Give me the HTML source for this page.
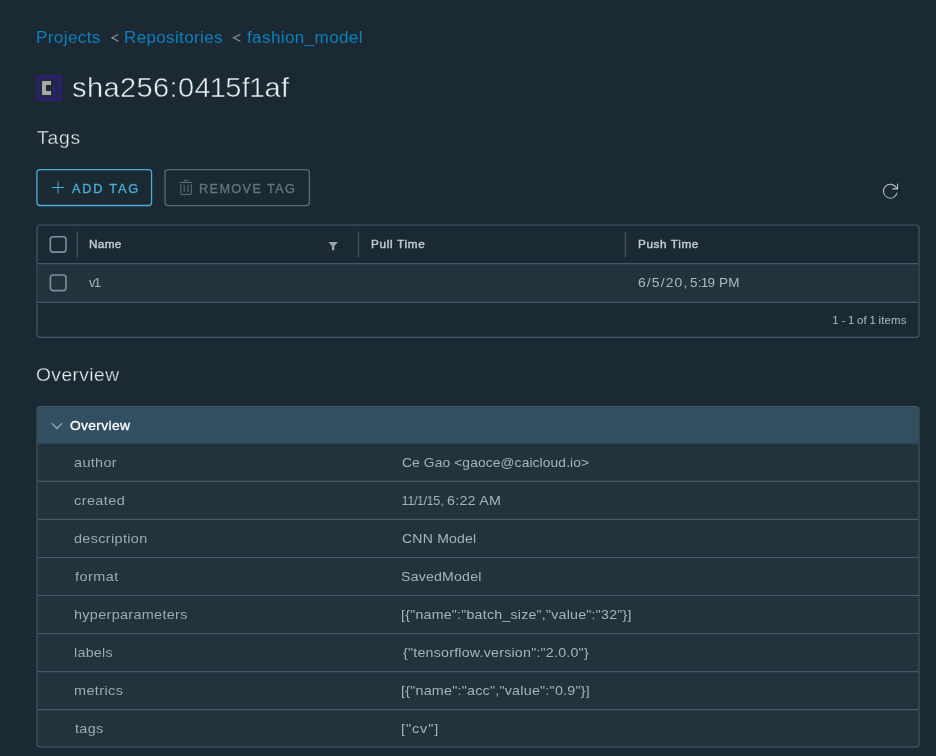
<!DOCTYPE html>
<html><head><meta charset="utf-8"><title>Artifact</title>
<style>
html,body{margin:0;padding:0;}
body{width:936px;height:756px;background:#1b2a32;position:relative;overflow:hidden;font-family:"Liberation Sans",sans-serif;}
.t{position:absolute;white-space:pre;line-height:20px;height:20px;display:block;will-change:transform;}
.abs{position:absolute;box-sizing:border-box;}
</style></head><body>
<svg class="abs" style="left:0;top:0" width="936" height="756" viewBox="0 0 936 756">
<!-- breadcrumb separators -->
<path d="M118.300 34.500L111.900 37.850L118.300 41.200" fill="none" stroke="#8e979c" stroke-width="1.100"/>
<path d="M240.300 34.500L233.500 37.850L240.300 41.200" fill="none" stroke="#8e979c" stroke-width="1.100"/>
<!-- buttons -->
<rect x="36.900" y="169.550" width="114.650" height="35.950" rx="3" fill="none" stroke="#49afd9" stroke-width="1.300"/>
<rect x="165.000" y="169.600" width="144.400" height="36.000" rx="3" fill="none" stroke="#5c6a73" stroke-width="1.300"/>
<!-- datagrid -->
<rect x="37.050" y="225.050" width="882.000" height="112.350" rx="3" fill="#1b2a32" stroke="#495865" stroke-width="1.12"/>
<rect x="37.650" y="263.650" width="880.800" height="38.750" fill="#21333b"/>
<line x1="37.6" y1="263.650" x2="918.4" y2="263.650" stroke="#495865" stroke-width="1.12"/>
<line x1="37.6" y1="302.400" x2="918.4" y2="302.400" stroke="#495865" stroke-width="1.12"/>
<line x1="77.250" y1="231.800" x2="77.250" y2="257.600" stroke="#495865" stroke-width="1.12"/>
<line x1="358.500" y1="231.800" x2="358.500" y2="257.600" stroke="#495865" stroke-width="1.12"/>
<line x1="625.400" y1="231.800" x2="625.400" y2="257.600" stroke="#495865" stroke-width="1.12"/>
<rect x="50.300" y="236.700" width="15.700" height="15.400" rx="2.800" fill="none" stroke="#80909a" stroke-width="1.600"/>
<rect x="50.400" y="275.000" width="15.600" height="15.600" rx="2.800" fill="none" stroke="#80909a" stroke-width="1.600"/>
<path d="M328.300 241.900H337.900L334.300 246.100V250.300H331.900V246.100Z" fill="#9aa5ab"/>
<!-- stack view -->
<rect x="37.050" y="406.600" width="881.900" height="340.400" rx="3" fill="#21333b" stroke="#495865" stroke-width="1.12"/>
<path d="M37.700 443.800V409.600a2.400 2.400 0 0 1 2.400 -2.400H915.900a2.400 2.400 0 0 1 2.400 2.400V443.800Z" fill="#324f62"/>
<line x1="37.6" y1="481.35" x2="918.4" y2="481.35" stroke="#495865" stroke-width="1.12"/>
<line x1="37.6" y1="519.40" x2="918.4" y2="519.40" stroke="#495865" stroke-width="1.12"/>
<line x1="37.6" y1="557.45" x2="918.4" y2="557.45" stroke="#495865" stroke-width="1.12"/>
<line x1="37.6" y1="595.50" x2="918.4" y2="595.50" stroke="#495865" stroke-width="1.12"/>
<line x1="37.6" y1="633.55" x2="918.4" y2="633.55" stroke="#495865" stroke-width="1.12"/>
<line x1="37.6" y1="671.60" x2="918.4" y2="671.60" stroke="#495865" stroke-width="1.12"/>
<line x1="37.6" y1="709.65" x2="918.4" y2="709.65" stroke="#495865" stroke-width="1.12"/>

<path d="M52.300 423.600L57.000 428.500L61.700 423.600" fill="none" stroke="#9aa4aa" stroke-width="1.350" stroke-linecap="round" stroke-linejoin="round"/>
<!-- icons -->
<g transform="translate(49.450 178.850) scale(0.476)" fill="#49afd9"><path d="M30 17H19V6a1 1 0 0 0-2 0v11H6a1 1 0 0 0 0 2h11v11a1 1 0 0 0 2 0V19h11a1 1 0 0 0 0-2z"/></g>
<g transform="translate(177.500 178.750) scale(0.476)" fill="#62707a"><path d="M27.140 34H8.860A2.930 2.930 0 0 1 6 31V11.230h2V31a.93.93 0 0 0 .86 1h18.280a.93.93 0 0 0 .86-1V11.230h2V31a2.930 2.930 0 0 1-2.860 3z"/><path d="M30.780 9H5a1 1 0 0 1 0-2h25.780a1 1 0 0 1 0 2z"/><rect x="21" y="13" width="2" height="15"/><rect x="13" y="13" width="2" height="15"/><path d="M23 5.860h-1.900V4h-6.200v1.860H13V4a2 2 0 0 1 1.900-2h6.200A2 2 0 0 1 23 4z"/></g>
<g transform="translate(881.350 183.250) scale(0.485)" fill="#b4c0c7"><path d="M22.400 11.650a1.090 1.090 0 0 0 1.090 1.090H34.430V1.810a1.090 1.090 0 1 0-2.190 0V8.950a15.410 15.410 0 1 0 1.300 11.330 1.090 1.090 0 0 0-2.110-.56A13.220 13.220 0 1 1 30.470 10.560H23.490a1.090 1.090 0 0 0-1.090 1.090z"/></g>
</svg>
<!-- title icon -->
<div class="abs" style="left:36px;top:75px;width:26px;height:26px;background:#2a2168;"></div>
<div class="abs" style="left:40px;top:79px;width:18px;height:18px;background:#1f2b36;"></div>
<div class="abs" style="left:42px;top:81px;width:9px;height:14px;background:#a6a6a6;"></div>
<div class="abs" style="left:46px;top:85px;width:6px;height:6px;background:#1f2b36;"></div>
<div class="abs" style="left:53px;top:81px;width:4px;height:3px;background:#2a2168;"></div>
<div class="abs" style="left:53px;top:86px;width:4px;height:9px;background:#2a2168;"></div>
<span id="bc1" class="t" style="left:35.94px;top:28.06px;font-size:16px;font-weight:400;color:#0d7fbd;letter-spacing:0.337px;transform:scaleX(1.0700);transform-origin:0 50%;">Projects</span>
<span id="bc2" class="t" style="left:123.75px;top:28.06px;font-size:16px;font-weight:400;color:#0d7fbd;letter-spacing:0.324px;transform:scaleX(1.0651);transform-origin:0 50%;">Repositories</span>
<span id="bc3" class="t" style="left:247.20px;top:28.06px;font-size:16px;font-weight:400;color:#0d7fbd;letter-spacing:0.350px;transform:scaleX(1.0670);transform-origin:0 50%;">fashion_model</span>
<span id="title" class="t" style="left:72.47px;top:77.70px;font-size:28px;font-weight:400;color:#e9ecef;letter-spacing:0.362px;transform:scaleX(1.0369);transform-origin:0 50%;-webkit-text-stroke:0.5px #1b2a32;">sha256:04<span style="margin:0 -1.12px">1</span>5f<span style="margin:0 -1.12px">1</span>af</span>
<span id="tags" class="t" style="left:37.30px;top:127.76px;font-size:18px;font-weight:400;color:#e9ecef;letter-spacing:0.732px;transform:scaleX(1.0700);transform-origin:0 50%;-webkit-text-stroke:0.3px #1b2a32;">Tags</span>
<span id="add" class="t" style="left:72.30px;top:178.54px;font-size:12px;font-weight:400;color:#49afd9;letter-spacing:1.686px;transform:scaleX(1.0600);transform-origin:0 50%;-webkit-text-stroke:0.3px #49afd9;">ADD TAG</span>
<span id="rem" class="t" style="left:199.08px;top:178.54px;font-size:12px;font-weight:400;color:#65747d;letter-spacing:1.281px;transform:scaleX(1.0600);transform-origin:0 50%;-webkit-text-stroke:0.3px #65747d;">REMOVE TAG</span>
<span id="hname" class="t" style="left:89.40px;top:233.99px;font-size:11px;font-weight:400;color:#c4cdd3;letter-spacing:0.311px;transform:scaleX(1.0689);transform-origin:0 50%;-webkit-text-stroke:0.4px #c4cdd3;">Name</span>
<span id="hpull" class="t" style="left:370.67px;top:233.99px;font-size:11px;font-weight:400;color:#c4cdd3;letter-spacing:0.627px;transform:scaleX(1.0700);transform-origin:0 50%;-webkit-text-stroke:0.4px #c4cdd3;">Pull Time</span>
<span id="hpush" class="t" style="left:637.67px;top:233.99px;font-size:11px;font-weight:400;color:#c4cdd3;letter-spacing:0.552px;transform:scaleX(1.0700);transform-origin:0 50%;-webkit-text-stroke:0.4px #c4cdd3;">Push Time</span>
<span id="tagv1" class="t" style="left:89.00px;top:273.00px;font-size:13px;font-weight:400;color:#acbac3;letter-spacing:-0.618px;transform:scaleX(0.9750);transform-origin:0 50%;">v<span style="margin:0 -0.91px">1</span></span>
<span id="pushA" class="t" style="left:638.01px;top:273.00px;font-size:13px;font-weight:400;color:#acbac3;letter-spacing:1.062px;transform:scaleX(1.0700);transform-origin:0 50%;">6/5/20,</span>
<span id="pushB" class="t" style="left:689.58px;top:273.00px;font-size:13px;font-weight:400;color:#acbac3;letter-spacing:0.180px;transform:scaleX(1.0374);transform-origin:0 50%;">5:<span style="margin:0 -0.91px">1</span>9 PM</span>
<span id="foot" class="t" style="left:832.70px;top:310.49px;font-size:11px;font-weight:400;color:#acbac3;letter-spacing:0.115px;transform:scaleX(1.0401);transform-origin:0 50%;"><span style="margin:0 -0.66px">1</span> - <span style="margin:0 -0.66px">1</span> of <span style="margin:0 -0.66px">1</span> items</span>
<span id="ov" class="t" style="left:36.25px;top:365.06px;font-size:18px;font-weight:400;color:#e9ecef;letter-spacing:0.410px;transform:scaleX(1.0654);transform-origin:0 50%;-webkit-text-stroke:0.3px #1b2a32;">Overview</span>
<span id="ovh" class="t" style="left:70.00px;top:416.10px;font-size:13px;font-weight:400;color:#ffffff;letter-spacing:0.309px;transform:scaleX(1.0627);transform-origin:0 50%;-webkit-text-stroke:0.3px #ffffff;">Overview</span>
<span id="l0" class="t" style="left:74.25px;top:452.82px;font-size:13.5px;font-weight:400;color:#9dabb4;letter-spacing:0.321px;transform:scaleX(1.0700);transform-origin:0 50%;">author</span>
<span id="v0" class="t" style="left:401.66px;top:452.82px;font-size:13.5px;font-weight:400;color:#a6b4bd;letter-spacing:0.106px;transform:scaleX(1.0226);transform-origin:0 50%;">Ce Gao &lt;gaoce@caicloud.io&gt;</span>
<span id="l1" class="t" style="left:74.27px;top:490.82px;font-size:13.5px;font-weight:400;color:#9dabb4;letter-spacing:0.403px;transform:scaleX(1.0700);transform-origin:0 50%;">created</span>
<span id="v1a" class="t" style="left:402.40px;top:490.82px;font-size:13.5px;font-weight:400;color:#a6b4bd;letter-spacing:0.206px;transform:scaleX(0.9200);transform-origin:0 50%;"><span style="margin:0 -0.61px">1</span><span style="margin:0 -0.61px">1</span>/<span style="margin:0 -0.61px">1</span>/<span style="margin:0 -0.61px">1</span>5,</span>
<span id="v1b" class="t" style="left:447.33px;top:490.82px;font-size:13.5px;font-weight:400;color:#a6b4bd;letter-spacing:0.262px;transform:scaleX(1.0535);transform-origin:0 50%;">6:22 AM</span>
<span id="l2" class="t" style="left:74.29px;top:528.82px;font-size:13.5px;font-weight:400;color:#9dabb4;letter-spacing:0.317px;transform:scaleX(1.0700);transform-origin:0 50%;">description</span>
<span id="v2" class="t" style="left:401.64px;top:528.82px;font-size:13.5px;font-weight:400;color:#a6b4bd;letter-spacing:0.208px;transform:scaleX(1.0387);transform-origin:0 50%;">CNN Model</span>
<span id="l3" class="t" style="left:74.80px;top:566.82px;font-size:13.5px;font-weight:400;color:#9dabb4;letter-spacing:0.451px;transform:scaleX(1.0700);transform-origin:0 50%;">format</span>
<span id="v3" class="t" style="left:401.38px;top:566.82px;font-size:13.5px;font-weight:400;color:#a6b4bd;letter-spacing:0.200px;transform:scaleX(1.0460);transform-origin:0 50%;">SavedModel</span>
<span id="l4" class="t" style="left:73.90px;top:604.82px;font-size:13.5px;font-weight:400;color:#9dabb4;letter-spacing:0.298px;transform:scaleX(1.0675);transform-origin:0 50%;">hyperparameters</span>
<span id="v4" class="t" style="left:401.38px;top:604.82px;font-size:13.5px;font-weight:400;color:#a6b4bd;letter-spacing:0.203px;transform:scaleX(1.0531);transform-origin:0 50%;">[{"name":"batch_size","value":"32"}]</span>
<span id="l5" class="t" style="left:73.90px;top:642.82px;font-size:13.5px;font-weight:400;color:#9dabb4;letter-spacing:0.265px;transform:scaleX(1.0565);transform-origin:0 50%;">labels</span>
<span id="v5" class="t" style="left:402.50px;top:642.82px;font-size:13.5px;font-weight:400;color:#a6b4bd;letter-spacing:0.207px;transform:scaleX(1.0547);transform-origin:0 50%;">{"tensorflow.version":"2.0.0"}</span>
<span id="l6" class="t" style="left:73.90px;top:680.82px;font-size:13.5px;font-weight:400;color:#9dabb4;letter-spacing:0.366px;transform:scaleX(1.0700);transform-origin:0 50%;">metrics</span>
<span id="v6" class="t" style="left:401.38px;top:680.82px;font-size:13.5px;font-weight:400;color:#a6b4bd;letter-spacing:0.213px;transform:scaleX(1.0596);transform-origin:0 50%;">[{"name":"acc","value":"0.9"}]</span>
<span id="l7" class="t" style="left:74.80px;top:718.82px;font-size:13.5px;font-weight:400;color:#9dabb4;letter-spacing:0.296px;transform:scaleX(1.0673);transform-origin:0 50%;">tags</span>
<span id="v7" class="t" style="left:401.38px;top:718.82px;font-size:13.5px;font-weight:400;color:#a6b4bd;letter-spacing:0.832px;transform:scaleX(1.0700);transform-origin:0 50%;">["cv"]</span>
</body></html>
